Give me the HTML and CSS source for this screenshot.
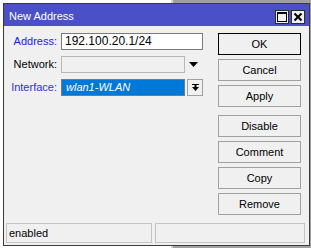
FILE: index.html
```html
<!DOCTYPE html>
<html>
<head>
<meta charset="utf-8">
<link rel="stylesheet" href="styles.css">
</head>
<body>
<div class="window">
  <div class="titlebar">
    <span class="title">New Address</span>
    <div class="tbtns">
      <span class="tbtn"><svg width="10" height="10" viewBox="0 0 10 10"><rect x="0.5" y="0.5" width="9" height="9" fill="none" stroke="#000" stroke-width="1"/><rect x="0" y="0" width="10" height="2" fill="#000"/></svg></span>
      <span class="tbtn"><svg width="10" height="10" viewBox="0 0 10 10"><path d="M1.5 1.5 L8.5 8.5 M8.5 1.5 L1.5 8.5" stroke="#000" stroke-width="2"/></svg></span>
    </div>
  </div>
  <div class="content">
    <div class="main">
      <div class="form">
        <span class="lbl blue">Address:</span>
        <div class="field"><div class="input wide">192.100.20.1/24</div></div>
        <span class="lbl">Network:</span>
        <div class="field"><div class="input short disabled"></div><span class="tri"><svg width="9" height="5" viewBox="0 0 9 5"><polygon points="0,0 9,0 4.5,5" fill="#000"/></svg></span></div>
        <span class="lbl blue2">Interface:</span>
        <div class="field"><div class="input short sel"><span class="seltext">wlan1-WLAN</span></div><span class="ddbtn"><svg width="7" height="8" viewBox="0 0 7 8"><rect x="0" y="0" width="7" height="1" fill="#000"/><rect x="2.5" y="1" width="2" height="3" fill="#000"/><polygon points="0,3 7,3 3.5,7" fill="#000"/></svg></span></div>
      </div>
      <div class="buttons">
        <div class="btn default">OK</div>
        <div class="btn">Cancel</div>
        <div class="btn">Apply</div>
        <div class="btn gap">Disable</div>
        <div class="btn">Comment</div>
        <div class="btn">Copy</div>
        <div class="btn">Remove</div>
      </div>
    </div>
    <div class="status">
      <div class="panel p1">enabled</div>
      <div class="panel p2"></div>
    </div>
  </div>
</div>
</body>
</html>
```
FILE: styles.css
```css
html, body {
  margin: 0;
  padding: 0;
}
body {
  width: 311px;
  height: 248px;
  overflow: hidden;
  background: linear-gradient(to right, #ffffff 0, #ffffff 171px, #d4d4d4 171px, #d4d4d4 173px, #a0a0a0 173px);
  font-family: "Liberation Sans", Arial, sans-serif;
}
.window {
  box-sizing: border-box;
  margin: 3px 0 0 3px;
  width: 307px;
  height: 243px;
  border: 1px solid #3a3a3a;
  background: #f0f0f0;
  display: flex;
  flex-direction: column;
}
.titlebar {
  height: 22px;
  background: #4b50c8;
  color: #fff;
  display: flex;
  justify-content: space-between;
  align-items: flex-start;
  padding: 0 4px 0 5px;
  flex: none;
}
.title {
  font-size: 11px;
  line-height: 22px;
  padding-top: 1px;
}
.tbtns {
  display: flex;
  gap: 2px;
  padding-top: 6px;
}
.tbtn {
  box-sizing: border-box;
  width: 14px;
  height: 14px;
  border: 1px solid #2a2a2a;
  background: #f0f0f0;
  display: flex;
  align-items: center;
  justify-content: center;
}
.tbtn svg { display: block; }
.content {
  flex: 1;
  display: flex;
  flex-direction: column;
}
.main {
  display: flex;
  padding-top: 7px;
}
.form {
  display: grid;
  grid-template-columns: 53px 142px;
  column-gap: 4px;
  row-gap: 6px;
  align-content: start;
}
.lbl {
  font-size: 11px;
  line-height: 17px;
  text-align: right;
  color: #000;
}
.lbl.blue { color: #1a1aee; }
.lbl.blue2 { color: #3030cc; }
.field {
  display: flex;
  align-items: center;
  height: 17px;
}
.input {
  box-sizing: border-box;
  height: 17px;
  border: 1px solid #7a7a7a;
  background: #fff;
  font-size: 12px;
  line-height: 15px;
  padding-left: 3px;
  white-space: nowrap;
  overflow: hidden;
}
.input.wide { width: 142px; }
.input.short { width: 124px; }
.input.disabled {
  border-color: #b8b8b8;
  background: #f0f0f0;
}
.input.sel {
  background: #0078d7;
  border-color: #7a7a7a;
  padding-left: 4px;
}
.seltext {
  color: #fff;
  font-style: italic;
  font-size: 11px;
}
.tri {
  margin-left: 4px;
  display: flex;
}
.tri svg { display: block; }
.ddbtn {
  box-sizing: border-box;
  margin-left: 2px;
  width: 16px;
  height: 17px;
  border: 1px solid #a0a0a0;
  background: #f0f0f0;
  display: flex;
  align-items: center;
  justify-content: center;
}
.ddbtn svg { display: block; }
.buttons {
  margin-left: 15px;
  width: 83px;
  display: flex;
  flex-direction: column;
  gap: 4px;
}
.btn {
  box-sizing: border-box;
  height: 22px;
  border: 1px solid #a0a0a0;
  background: #f0f0f0;
  font-size: 11px;
  line-height: 20px;
  text-align: center;
  color: #000;
}
.btn.default {
  border-color: #000;
}
.btn.gap {
  margin-top: 4px;
}
.status {
  margin-top: auto;
  display: flex;
  gap: 3px;
  padding: 0 4px 2px 2px;
}
.panel {
  box-sizing: border-box;
  height: 20px;
  border: 1px solid #c4c4c4;
  font-size: 11px;
  line-height: 18px;
  padding-left: 2px;
  color: #000;
}
.p1 { width: 146px; }
.p2 { width: 150px; }
```
